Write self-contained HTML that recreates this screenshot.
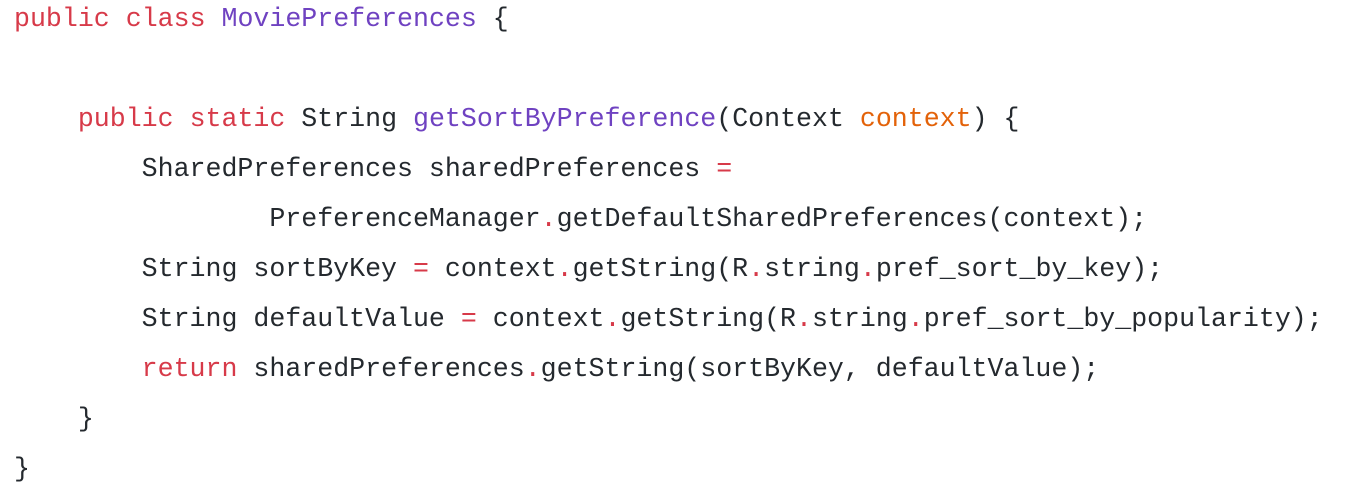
<!DOCTYPE html>
<html><head><meta charset="utf-8"><style>
html,body{margin:0;padding:0;background:#fff;width:1348px;height:490px;overflow:hidden}
pre{position:absolute;left:14px;top:-6px;margin:0;font-family:"Liberation Mono",monospace;font-size:26.6px;line-height:50px;color:#24292e;white-space:pre}
.k{color:#d73a49}.f{color:#6f42c1}.p{color:#e36209}
</style></head><body><pre><span class="k">public</span> <span class="k">class</span> <span class="f">MoviePreferences</span> {

    <span class="k">public</span> <span class="k">static</span> String <span class="f">getSortByPreference</span>(Context <span class="p">context</span>) {
        SharedPreferences sharedPreferences <span class="k">=</span>
                PreferenceManager<span class="k">.</span>getDefaultSharedPreferences(context);
        String sortByKey <span class="k">=</span> context<span class="k">.</span>getString(R<span class="k">.</span>string<span class="k">.</span>pref_sort_by_key);
        String defaultValue <span class="k">=</span> context<span class="k">.</span>getString(R<span class="k">.</span>string<span class="k">.</span>pref_sort_by_popularity);
        <span class="k">return</span> sharedPreferences<span class="k">.</span>getString(sortByKey, defaultValue);
    }
}</pre></body></html>
